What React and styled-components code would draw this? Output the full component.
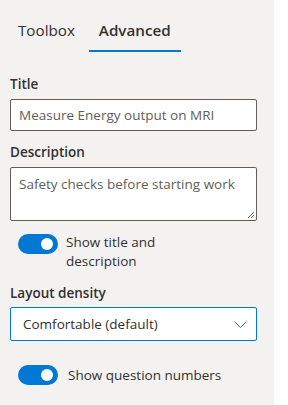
import React from "react";
import styled, { createGlobalStyle } from "styled-components";

const Global = createGlobalStyle`
  html, body { margin: 0; padding: 0; background: #ffffff; }
  body { font-family: "Segoe UI", "Open Sans", "Noto Sans", sans-serif; color: #323130; }
  * { box-sizing: border-box; }
`;

const Panel = styled.div`
  width: 274px;
  height: 405px;
  background: #f3f2f1;
  display: flex;
  flex-direction: column;
  padding: 0 16px 0 10px;
`;

const Tabs = styled.div`
  display: flex;
  align-items: stretch;
  height: 52px;
`;

const Tab = styled.div`
  display: flex;
  align-items: center;
  padding: 10px ${p => (p.$first ? "14px" : "10px")} 0 ${p => (p.$first ? "8px" : "10px")};
  font-size: 15.2px;
  font-weight: ${p => (p.$active ? 600 : 400)};
  color: #323130;
  border-bottom: 2px solid ${p => (p.$active ? "#0078d4" : "transparent")};
`;

const Label = styled.div`
  font-size: 13.5px;
  font-weight: 600;
  color: #323130;
  margin-top: ${p => p.$mt || 0}px;
  margin-bottom: ${p => (p.$mb == null ? 5 : p.$mb)}px;
  line-height: 20px;
`;

const Input = styled.div`
  height: 32px;
  width: 247px;
  border: 1px solid #605e5c;
  border-radius: 2px;
  background: #fff;
  display: flex;
  align-items: center;
  padding: 0 8px;
  font-size: 13.5px;
  color: #605e5c;
`;

const TextArea = styled.div`
  position: relative;
  height: 54px;
  width: 247px;
  border: 1px solid #605e5c;
  border-radius: 2px;
  background: #fff;
  padding: 7px 8px;
  font-size: 13.5px;
  line-height: 19px;
  color: #605e5c;
`;

const Grip = styled.svg`
  position: absolute;
  right: 1px;
  bottom: 1px;
`;

const ToggleRow = styled.div`
  display: flex;
  align-items: flex-start;
  gap: ${p => p.$gap || 8}px;
  padding-left: 8px;
  margin-top: ${p => p.$mt || 0}px;
`;

const Toggle = styled.div`
  flex: none;
  width: 40px;
  height: 20px;
  border-radius: 10px;
  background: #0078d4;
  position: relative;
  &::after {
    content: "";
    position: absolute;
    right: 5px;
    top: 4px;
    width: 12px;
    height: 12px;
    border-radius: 50%;
    background: #fff;
  }
`;

const ToggleLabel = styled.div`
  font-size: 13.5px;
  line-height: 19px;
  color: #323130;
  max-width: ${p => p.$max || "none"};
  margin-top: ${p => p.$mt || 0}px;
`;

const Dropdown = styled.div`
  height: 34px;
  width: 247px;
  border: 1px solid #0078d4;
  border-radius: 2px;
  background: #fff;
  display: flex;
  align-items: center;
  justify-content: space-between;
  padding: 0 9px 0 12px;
  font-size: 13.5px;
  color: #323130;
`;

export default function App() {
  return (
    <>
      <Global />
      <Panel>
        <Tabs>
          <Tab $first>Toolbox</Tab>
          <Tab $active>Advanced</Tab>
        </Tabs>
        <Label $mt={22}>Title</Label>
        <Input>Measure Energy output on MRI</Input>
        <Label $mt={11}>Description</Label>
        <TextArea>
          Safety checks before starting work
          <Grip width="9" height="9" viewBox="0 0 9 9">
            <path d="M8 2 L2 8 M8 5 L5 8" stroke="#605e5c" strokeWidth="1" fill="none" />
          </Grip>
        </TextArea>
        <ToggleRow $mt={13}>
          <Toggle />
          <ToggleLabel $max="110px" $mt={-1}>Show title and description</ToggleLabel>
        </ToggleRow>
        <Label $mt={12} $mb={4}>Layout density</Label>
        <Dropdown>
          <span>Comfortable (default)</span>
          <svg width="13" height="7" viewBox="0 0 13 7">
            <path d="M0.5 0.5 L6.5 6.5 L12.5 0.5" stroke="#605e5c" strokeWidth="1" fill="none" />
          </svg>
        </Dropdown>
        <ToggleRow $mt={24} $gap={10}>
          <Toggle />
          <ToggleLabel $mt={1}>Show question numbers</ToggleLabel>
        </ToggleRow>
      </Panel>
    </>
  );
}
